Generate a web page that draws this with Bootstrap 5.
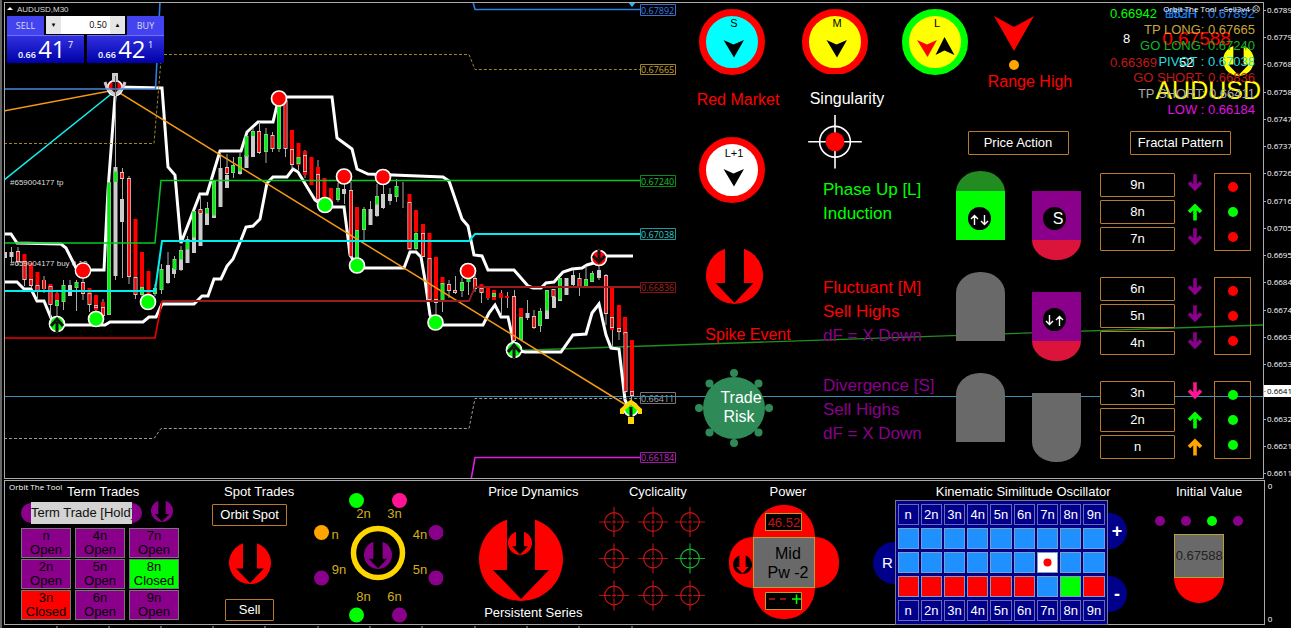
<!DOCTYPE html>
<html lang="en">
<head>
<meta charset="utf-8">
<meta name="viewport" content="width=device-width, initial-scale=1">
<title>AUDUSD,M30</title>
<link href="https://cdn.jsdelivr.net/npm/bootstrap@5.3.0/dist/css/bootstrap.min.css" rel="stylesheet">
<style>
:root{--purple:#8b008b;--lime:#0f0;--navy:#00008b;--bronze:#b87a2e;--gold:#ffd700}
body{background:#000;color:#fff;font:13px/16px "Liberation Sans",Arial,sans-serif;overflow-x:hidden}
.terminal{padding:2px 0 0 4px;box-shadow:inset 2px 0 #666;gap:1px;overflow:hidden}
.pane{border:1px solid #aaa;min-width:0}
.tiny{font:8px/12px "Open Sans",sans-serif}
.axis{width:27px;overflow:hidden}
.axis li{line-height:12px;padding-left:3px;position:relative;white-space:nowrap}
.axis.scale{padding-top:2px}
.axis.scale li::before{content:"";position:absolute;left:0;top:6px;width:2px;height:1px;background:#aaa}
.axis li.now{background:#fff;color:#000}
.plotarea{width:100%;height:100%;top:0;left:0}
svg text{font-family:"Liberation Sans",Arial,sans-serif}
svg .tag text,svg .note{font-family:"Open Sans",sans-serif}
.caption16{font-size:16px;line-height:24px;white-space:nowrap}
.t-red{color:#f00}.t-lime{color:var(--lime)}.t-purple{color:var(--purple)}.t-pink{color:#ff1493}.t-orange{color:#ffa500}
.t-blue{color:#1e7fe8}.t-gold{color:#c8a63a}.t-green{color:#12b52a}.t-cyan{color:#2dd}.t-brick{color:#c01818}.t-silver{color:#aaa}.t-magenta{color:#e010e0}
.b-purple{background:var(--purple)}.b-lime{background:var(--lime)}.b-red{background:#f00}

/* one-click quote panel */
.quote{left:2px;top:13px;width:157px;font-family:"Open Sans",sans-serif}
.quote button{border:0;padding:0;color:#dde;background:#4343f0}
.side{width:37px;height:19px;font-size:9px;line-height:18px}
.spin{height:18px;width:79px;background:#ddd}
.spin button{width:15px;background:#e6e6e6;color:#000;font-size:6px;line-height:18px}
.spin input{width:49px;border:0;padding:0 3px 0 0;font-size:9px;text-align:right;color:#000}
.quote .tile{height:28px;background:linear-gradient(#3030e0,#0000a8);color:#fff;font-size:9px;font-weight:600;border-top:1px solid #7070ff}
.tile b{font-size:24px;line-height:24px;font-weight:400}
.tile sup{font-size:9px;font-weight:400;top:-10px}

/* signal board */
.board{padding-top:6px}
.col-a{width:104px}
.gap-label{margin-top:13px}
.gap-ring{margin-top:25px}
.gap-spike{margin-top:44px}
.gap-spiketext{margin-top:19px}
.gap-risk{margin-top:22px}
.board-main{width:475px}
.strip{height:162px}
.stack-m{width:94px}
.stack-l{width:86px;padding-left:20px}
.stack-r{width:100px;padding-top:7px}
.gap-dot{margin-top:9px}
.frame-btn{background:#000;color:#fff;border:1px solid var(--bronze);border-radius:1px;height:24px;padding:0;font-size:13px;line-height:20px;white-space:nowrap}
.frame-btn.slim{height:22px}
.fb-wide{width:101px}.fb-mid{width:75px}.fb-small{width:49px}
.gap-26{gap:26px}.gap-3px{gap:3px}
.phases{width:168px;padding:7px 0 0 35px;gap:26px}
.phases p{margin:0;height:72px;font-size:17px;line-height:24px;white-space:nowrap}
.tombs{width:49px;gap:32px}
.tombs.low{margin:20px 19px 0 27px}
.tomb{height:69px;background:#696969;border-radius:24px 24px 0 0/21px 21px 0 0;overflow:hidden}
.low .tomb{border-radius:0 0 24px 24px/0 0 20px 20px}
.tomb.up{background:linear-gradient(#228b22 20px,var(--lime) 20px);padding:36px 0 0 12px}
.tomb.down{background:linear-gradient(var(--purple) 49px,#dc143c 49px);padding:16px 0 0 11px}
.eye{width:23px;height:23px}
.eye.big{font-size:16px;line-height:23px;padding-left:7px}
.levels{padding-top:2px}
.levels.arrows{width:18px;margin:0 10px 0 11px}
.slot{height:24px}
.lamps{width:37px;height:78px;border:1px solid var(--bronze)}
.lamp{width:10px;height:10px;border-radius:50%}

/* price read-outs in the corner */
.pivots{top:3px;right:8px;text-align:right;white-space:nowrap}
.info{top:0;right:2px;width:151px}
.info .r1{height:22px;padding-top:3px;gap:9px}
.info .r2{height:28px;gap:32px;padding:0 0 0 13px}
.info .r3{height:24px;gap:14px;padding-top:2px}
.big19{font-size:19px;line-height:22px}
.sym{font-size:25px;line-height:26px;color:#ff0;white-space:nowrap}
.badge-icon{top:42px;right:9px}
.prog{top:0;right:3px;white-space:nowrap}

/* lower panel */
.lower{display:grid;grid-template-columns:200fr 100fr 145fr 150fr 115fr 145fr 270fr 133fr;height:145px}
.lower>section{padding-top:3px;min-width:0}
.lower h2{font-size:13px;line-height:16px;font-weight:400;margin:0;text-align:center;white-space:nowrap}
.term{padding-left:16px}
.term h2{text-align:left;padding-left:46px}
.cap{width:10px;height:20px;background:var(--purple)}
.cap.l{border-radius:10px 0 0 10px}.cap.r{border-radius:0 10px 10px 0}
.hold{width:101px;height:22px;line-height:22px;background:#d3d3d3;color:#111;border:0;padding:0;font-size:13px}
.cells{display:grid;grid-template-columns:repeat(3,50px);gap:1px 4px;margin-top:2px}
.cells button{height:30px;border:1px solid #777;color:#000;padding:0;font-size:13px;line-height:14px}
.spot{padding-right:11px}
.spot h2{padding-left:19px}
.petals{display:grid;grid-template:32px 51px 31px/24px 62px 24px;margin-top:5px}
.petal{background:#f00}
.petal.north{border-radius:30px 30px 0 0/32px 32px 0 0}
.petal.west{border-radius:24px 0 0 24px}
.petal.east{border-radius:0 24px 24px 0}
.petal.south{border-radius:0 0 30px 30px/0 0 31px 31px}
.mini{width:37px;height:18px;background:#000;border:1px solid #b8a030;line-height:17px;margin:0 auto}
.core{background:#696969;border:1px solid #b8a030;color:#000;font-size:16px;line-height:19px;padding-left:8px}
.osc h2{text-align:right;padding-right:20px}
.osc table{border-collapse:separate;border-spacing:2px 3px;background:var(--navy);border:1px solid #778;width:213px;height:125px;table-layout:fixed}
.osc td,.osc th{height:21px;padding:0;border:1px solid #6a6ab0;font-size:13px;font-weight:400;line-height:19px;text-align:center}
.osc td{background:#1e90ff;border-color:#7f9fbf}
.osc td.r{background:#f00}.osc td.g{background:var(--lime)}.osc td.w{background:#fff}
.knob{background:var(--navy);border:0;color:#fff;padding:0;width:19px;height:36px;border-radius:0 18px 18px 0;font-weight:700;font-size:18px;line-height:24px}
.knob.rr{width:22px;height:42px;border-radius:21px 0 0 21px;font-weight:400;font-size:15px;padding-left:8px}
.start-val{width:50px;height:44px;background:#696969;border:1px solid #b8a030;color:#222;line-height:42px}
.start-cup{width:50px;height:25px;background:#f00;border-radius:0 0 25px 25px}
.ticks{height:2px}
</style>
</head>
<body>
<svg width="0" height="0" class="position-absolute" aria-hidden="true">
  <symbol id="drop" viewBox="-42 -42 84 84"><path fill="currentColor" d="M-14-39.6A42 42 0 1 0 14-39.6V11H28L0 40-28 11H-14Z"/></symbol>
  <symbol id="cross" viewBox="-16 -16 32 32"><g fill="none" stroke="currentColor" stroke-width="1.2"><circle r="9.3"/><path d="M0-15V-3M0 3V15M-15 0H-3M3 0H15M-2 0H2M0-2V2" opacity=".9"/></g></symbol>
  <symbol id="dn" viewBox="0 0 14 16"><path d="M7 1V12M2 8L7 13 12 8" fill="none" stroke="currentColor" stroke-width="3"/></symbol>
  <symbol id="upp" viewBox="0 0 14 16"><path d="M7 15V4M2 8L7 3 12 8" fill="none" stroke="currentColor" stroke-width="3"/></symbol>
</svg>

<main class="terminal min-vh-100 d-flex flex-column">
  <div class="d-flex flex-grow-1">
    <div class="pane flex-grow-1 position-relative overflow-hidden">
      <svg class="plotarea position-absolute" role="img" aria-label="AUDUSD price chart">
        <g transform="translate(-5 -3)" fill="none">
          <path d="M4 396.5H3000" stroke="#3a8fb5"/>
          <path d="M514 350.5L1263 325" stroke="#1f8f1f" stroke-width="1.3"/>
          <!-- channel -->
          <g stroke="#fff" stroke-width="3">
            <path d="M5 234H11L17 243 61 244 66 248 76 268 83 270H104L108 190 115 97 118 87 162 88 168 167 175 175 181 243 200 194H207L220 151H241L247 132 258 122H273L279 97H332L337 138 352 149 357 169 368 174 443 177 449 181 462 219 468 226 474 255 482 256 488 270H514L528 286 533 288H541L546 283 554 282 563 272 572 269 582 268 587 265 597 262 607 256H633"/>
            <path d="M5 282H17L24 289H31L37 301H44L51 318 57 325H105L110 322H143L149 317H156L162 304H194L202 296H208L214 279H221L227 266 233 259 241 240 246 227 253 226 260 219 267 183 273 177H287L293 169 298 172 315 200 325 207H344L347 230 350 255 357 266 362 268H404L410 252H416L421 257 425 280 430 315 435 323 441 325H483L489 313 495 305 501 317H508L512 335 514 350 525 352H561L573 335 586 334 592 313 599 304 606 335 611 348 619 349 625 400 630 410"/>
          </g>
          <!-- wicks -->
          <path stroke="#aaa" d="M11.500 247V262M18 247V265M24.500 254V286M31.500 270V288M37.500 272V300M44 276V293M50.500 284V318M57 292V320M63.500 280V310M70 280V296M76.500 280V311M83 270V300M89.500 288V312M96 295V320M103 299V318M115.500 90V280M122.500 168V278M129 176V284M135.500 268V299M142 280V300M148.500 280V304M155 284V296M161.500 264V294M168 252V284M174.500 256V278M181 246V271M187.500 236V262M200.500 195V245M207.500 202V225M220.500 152V207M227 154V188M233.500 157V178M240 153V175M253 128V157M259.500 122V154M266 128V163M272.500 132V152M279 100V152M285.500 98V157M292 140V168M298.500 157V170M305 150V178M318 160V203M325 196V207M338 183V202M344.500 176V204M351 182V258M357.500 210V267M364 207V240M370.500 201V225M377 184V217M383.500 178V209M390 188V205M396.500 179V202M403 182V208M416 220V250M436 258V323M442.500 280V312M449 280V298M455.500 276V294M462 278V297M468.500 268V295M475 275V292M481.500 284V303M488 287V300M494.500 290V300M501.500 290V316M507.500 292V308M514.500 290V350M527.500 300V320M534 310V329M540.500 308V332M573.500 270V286M579.500 273V296M586 266V287M592.500 271V282M599 258V280M606 274V325M612.500 290V347M619 305V340M625 318V394M631.500 340V412"/>
          <!-- momentum bars -->
          <path stroke="#f00" stroke-width="4" d="M24.500 254V280M31 263V285M37.500 272V292M50.500 284V304M57 293V305M89.500 288V300M96 295V310M103 302V315M135.500 219V277M142 252V290M148.500 271V299M292 130V165M298.500 143V165M305 151V175M311.500 157V185M318 167V200M324.500 178V200M331 188V205M357 207V240M409.500 194V250M416 210V232M423 224V250M429.500 233V300M436 257V300M442.500 277V285M481.500 284V292M488 288V298M494 290V300M501 293V298M507 296V298M521 308V330M612 286V330M619 305V332M625 317V335M632 340V392"/>
          <path stroke="#ccc" stroke-width="4" d="M5 252V258M11.500 252V257M70 285V296M115.500 167V276M122 199V222M168 265V283M174 268V274M181 258V270M187.500 250V263M194 235V253M200.500 211V246M207 213V225M214 205V218M220.500 168V207M227 175V188M233 165V168M240 170V174M246.500 155V168M253 136V157M344 189V194M370.500 209V225M377 203V216M383 194V208M390 194V201M527.500 313V318M547 300V319M554 297V308M560 290V301M566.500 278V295M573 275V285M599 270V278"/>
          <!-- candle bodies -->
          <path stroke="#ccc" stroke-width="4" d="M18 251V262M24.500 261V280M31 279V286M37.500 285V292M44 280V289M50.500 286V305M83 282V294M89.500 293V305M96 305V308M103 307V316M122 172V179M129 178V277M135.500 277V295M200.500 209V214M227 167V174M259 131V153M272.500 135V149M285.500 100V149M292 149V165M305 155V172M318 174V200M351 190V257M409.500 202V249M423 233V257M429.500 258V300M436 299V303M449 284V291M455 290V293M475 278V289M481.500 288V293M514 296V341M534 316V328M553.500 289V297M579.500 278V287M606 275V314M612 317V328M619 328V332M625.500 332V392M632 391V396"/>
          <path stroke="#f00808" stroke-width="2.600" d="M18 252V261M24.500 262V279M31 280V285M37.500 286V291M44 280V289M50.500 287V304M83 283V293M89.500 294V304M96 306V307M103 308V315M122 173V178M129 179V276M135.500 278V294M200.500 210V213M227 168V173M259 132V152M272.500 136V148M285.500 101V148M292 150V164M305 156V171M318 175V199M351 191V256M409.500 203V248M423 234V256M429.500 259V299M436 300V302M449 285V290M455 291V292M475 279V288M481.500 289V292M514 297V340M534 317V327M553.500 290V296M579.500 279V286M606 276V313M612 318V327M619 329V331M625.500 333V391M632 392V395"/>
          <path stroke="#8c8" stroke-width="4" d="M57 300V306M63.500 285V302M76.500 282V288M109 182V315M115.500 171V182M142 287V295M155 288V294M161.500 269V290M174.500 259V270M181 250V260M187.500 239V250M194 211V238M207 208V214M214 181V216M233 165V173M240 157V172M246.500 136V157M253 131V136M266 134V152M279 100V149M298.500 157V164M338 188V200M357 230V262M364 209V230M377 196V205M396.500 186V197M416 233V249M442.500 283V302M462 282V291M468.500 277V282M494 293V297M521 317V340M540 311V326M547 290V311M560 278V300M586 279V287M592 273V282"/>
          <path stroke="#00f010" stroke-width="2.600" d="M57 301V305M63.500 286V301M76.500 283V287M109 183V314M115.500 172V182M142 288V294M155 289V293M161.500 270V289M174.500 260V269M181 251V259M187.500 240V249M194 212V237M207 209V213M214 182V215M233 166V172M240 158V171M246.500 137V156M253 132V136M266 135V151M279 101V148M298.500 158V163M338 189V199M357 231V261M364 210V229M377 197V204M396.500 187V196M416 234V248M442.500 284V301M462 283V290M468.500 278V282M494 294V296M521 318V339M540 312V325M547 291V310M560 279V299M586 280V286M592 274V281"/>
          <!-- pivot levels -->
          <path stroke="#2a7fe8" stroke-width="1.600" d="M155.500 89L157 60 160 2M473 2L475 9.500H640"/>
          <path stroke="#a08428" stroke-dasharray="3 2" d="M4 143.500H154L161 60M164 54.500H469L475 69.500H640"/>
          <path stroke="#f59a12" stroke-width="1.500" d="M4 111L115 90 631 408"/>
          <path stroke="#1ee" stroke-width="1.600" d="M4 180L115 91"/>
          <path stroke="#0ee" stroke-width="2" d="M4 291H155L162 241H469L475 234H640"/>
          <path stroke="#0c2" stroke-width="1.500" d="M4 243H155L161 180.500H640"/>
          <path stroke="#e00" stroke-width="1.600" d="M4 338H155L162 301"/>
          <path stroke="#9b1c1c" stroke-width="1.800" d="M162 301H469L475 287H640"/>
          <path stroke="#999" stroke-dasharray="3 2" d="M4 438.500H154L161 428.500H469L475 398.500H640"/>
          <path stroke="#e01ee0" stroke-width="1.600" d="M471 480L475 457.500H640"/>
          <path fill="#1fbfff" d="M628 2H636L632 7Z"/>
          <!-- swing markers -->
          <g fill="#f00" stroke="#fff" stroke-width="1.700"><circle cx="83" cy="270.500" r="7.500"/><circle cx="279" cy="98.500" r="7.500"/><circle cx="344" cy="176.500" r="7.500"/><circle cx="383" cy="177" r="7.500"/><circle cx="468" cy="271" r="7.500"/><circle cx="599" cy="258" r="7.500"/><circle cx="115" cy="88" r="7.500"/></g>
          <g fill="#0f0" stroke="#fff" stroke-width="1.700"><circle cx="57" cy="324" r="7.500"/><circle cx="96" cy="319" r="7.500"/><circle cx="148" cy="302" r="7.500"/><circle cx="325" cy="205" r="7.500"/><circle cx="357" cy="265.500" r="7.500"/><circle cx="435.500" cy="322.500" r="7.500"/><circle cx="514" cy="350" r="7.500"/><circle cx="631" cy="409" r="7"/></g>
          <path stroke="#111" stroke-width="3" d="M51 326L57 319 63 326M57 322V332M508 352L514 345 520 352M514 348V358M593 256L599 262 605 256M599 250V260"/>
          <path d="M115 82V92" stroke="#111" stroke-width="5"/><path d="M105 82L107 88 115 95 123 88 125 82" stroke="#ccc" stroke-width="3"/><path d="M115 73V82" stroke="#ccc" stroke-width="6"/><path d="M4 89H155" stroke="#4a86d8" stroke-width="1.600"/><path d="M115.500 76V96" stroke="#556"/>
          <path d="M622 414V410L631 402 640 410V414" stroke="#ffd700" stroke-width="4"/><path d="M631 407V417" stroke="#111" stroke-width="3"/><path d="M631 417V424" stroke="#ffd700" stroke-width="6"/>
          <!-- level tags -->
          <g class="tag" font-size="9" stroke-width="1">
            <path fill="#000" stroke="#3a6fc8" d="M640.500 4.500H675.500V15.500H640.500Z"/><text x="641" y="13.500" fill="#3a7fe0">0.67892</text>
            <path fill="#000" stroke="#a08428" d="M640.500 64.500H675.500V74.500H640.500Z"/><text x="641" y="73" fill="#c8a63a">0.67665</text>
            <path fill="#000" stroke="#0a8a1a" d="M640.500 175.500H675.500V186.500H640.500Z"/><text x="641" y="184.500" fill="#1fc02f">0.67240</text>
            <path fill="#000" stroke="#189a9a" d="M640.500 228.500H675.500V239.500H640.500Z"/><text x="641" y="237.500" fill="#3cc">0.67038</text>
            <path fill="#000" stroke="#801515" d="M640.500 282.500H675.500V292.500H640.500Z"/><text x="641" y="291" fill="#a82020">0.66836</text>
            <path fill="#000" stroke="#777" d="M640.500 392.500H675.500V403.500H640.500Z"/><text x="641" y="401.500" fill="#aaa">0.66411</text>
            <path stroke="#3a8fb5" d="M640 396.500H676"/>
            <path fill="#000" stroke="#a018a0" d="M640.500 452.500H675.500V462.500H640.500Z"/><text x="641" y="461" fill="#c22ec2">0.66184</text>
          </g>
          <g class="note" fill="#ddd" font-size="8"><path d="M7 10H13L10 7Z" fill="#fff"/><text x="17" y="12">AUDUSD,M30</text><text x="10" y="185">#659004177 tp</text><text x="10" y="266">#659004177 buy 0.10</text></g>
          <circle cx="83" cy="270.500" r="6.800" fill="#f00"/>
        </g>
      </svg>

      <div class="quote position-absolute">
        <div class="d-flex justify-content-between">
          <button class="side" type="button">SELL</button>
          <div class="spin d-flex"><button type="button" aria-label="Less">▼</button><input type="text" value="0.50" aria-label="Volume"><button type="button" aria-label="More">▲</button></div>
          <button class="side" type="button">BUY</button>
        </div>
        <div class="d-flex gap-3px">
          <button class="tile flex-fill" type="button">0.66 <b>41</b> <sup>7</sup></button>
          <button class="tile flex-fill" type="button">0.66 <b>42</b> <sup>1</sup></button>
        </div>
      </div>

      <div class="board position-relative d-flex justify-content-end">
        <div class="col-a d-flex flex-column align-items-center">
          <svg class="me-2" width="66" height="66"><circle cx="33" cy="33" r="29.500" fill="#0ff" stroke="#f00" stroke-width="7"/><text x="35" y="18" font-size="11" text-anchor="middle">S</text><path d="M24.500 31L34.500 35.500 45 31 35 48.500Z"/></svg>
          <span class="caption16 gap-label ps-1 t-red">Red Market</span>
          <svg class="gap-ring me-2" width="66" height="66"><circle cx="33" cy="33" r="29.500" fill="#fff" stroke="#f00" stroke-width="7"/><text x="35" y="20" font-size="11" text-anchor="middle">L+1</text><path d="M24.500 32L34.500 36.500 45 32 35 49.500Z"/></svg>
          <svg class="gap-spike me-1 t-red" width="57" height="57"><use href="#drop"/></svg>
          <span class="caption16 gap-spiketext ps-4 t-red">Spike Event</span>
          <svg class="gap-risk me-1" width="78" height="78" viewBox="-39 -39 78 78"><g fill="#2e8b57"><circle r="31"/><circle cy="-35" r="4"/><circle cy="35" r="4"/><circle cx="-35" r="4"/><circle cx="35" r="4"/><circle cx="-24.500" cy="-24.500" r="4"/><circle cx="24.500" cy="-24.500" r="4"/><circle cx="-24.500" cy="24.500" r="4"/><circle cx="24.500" cy="24.500" r="4"/></g><g fill="#fff" font-size="16" text-anchor="middle"><text x="7" y="-5">Trade</text><text x="5" y="14">Risk</text></g></svg>
        </div>
        <div class="board-main">
          <div class="strip d-flex">
            <div class="stack-m d-flex flex-column align-items-center">
              <svg width="66" height="66"><circle cx="33" cy="33" r="29.500" fill="#ff0" stroke="#f00" stroke-width="7"/><text x="35" y="18" font-size="11" text-anchor="middle">M</text><path d="M24.500 31L34.500 35.500 45 31 35 48.500Z"/></svg>
              <span class="caption16 gap-label ps-4">Singularity</span>
              <svg width="56" height="60" viewBox="-28 -28 56 60"><g fill="none" stroke="#fff" stroke-width="1.600"><circle r="15.500" cy="3"/><path d="M0-24V30M-27 3H27"/></g><circle cy="3" r="9.500" fill="#f00"/></svg>
            </div>
            <div class="stack-l">
              <svg width="66" height="66"><circle cx="33" cy="33" r="29.500" fill="#ff0" stroke="#0f0" stroke-width="7"/><text x="35" y="18" font-size="11" text-anchor="middle">L</text><path fill="#f00" d="M15 31L25 35.500 35 31 25.500 48Z"/><path d="M42.500 28L52.500 46 42.500 41.500 33.500 46Z"/></svg>
            </div>
            <div class="stack-r d-flex flex-column align-items-center">
              <svg class="me-2" width="40" height="35"><path fill="#f00" d="M0 0L20 11 40 0 20 35Z"/></svg>
              <svg class="me-2 gap-dot" width="10" height="10"><circle cx="5" cy="5" r="5" fill="#ffa500"/></svg>
              <span class="caption16 ps-4 t-red">Range High</span>
              <button class="frame-btn fb-wide mt-auto mb-3" type="button">Price Action</button>
            </div>
            <div class="ms-auto me-4 pe-2 d-flex align-items-end mb-3">
              <button class="frame-btn fb-wide" type="button">Fractal Pattern</button>
            </div>
          </div>
          <div class="d-flex">
            <div class="phases d-flex flex-column">
              <p class="t-lime">Phase Up [L]<br>Induction</p>
              <p class="t-red">Fluctuant [M]<br>Sell Highs<br><span class="t-purple">dF = X Down</span></p>
              <p class="t-purple">Divergence [S]<br>Sell Highs<br>dF = X Down</p>
            </div>
            <div class="tombs d-flex flex-column">
              <div class="tomb up"><svg class="eye d-block" viewBox="0 0 23 23"><circle cx="11.500" cy="11.500" r="11.500"/><path d="M6.500 18V9M3 12L6.500 8.500 10 12M16.500 8V17M13 14L16.500 17.500 20 14" fill="none" stroke="#fff" stroke-width="1.400"/></svg></div>
              <div class="tomb"></div>
              <div class="tomb"></div>
            </div>
            <div class="tombs low d-flex flex-column">
              <div class="tomb down"><div class="eye big bg-black rounded-circle text-center">S</div></div>
              <div class="tomb down"><svg class="eye d-block" viewBox="0 0 23 23"><circle cx="11.500" cy="11.500" r="11.500"/><path d="M6.500 7V16M3 13L6.500 16.500 10 13M16.500 18V8M13 12L16.500 8.500 20 12" fill="none" stroke="#fff" stroke-width="1.400"/></svg></div>
              <div class="tomb"></div>
            </div>
            <div class="levels d-flex flex-column gap-26">
              <div class="d-flex flex-column gap-3px"><button class="frame-btn fb-mid" type="button">9n</button><button class="frame-btn fb-mid" type="button">8n</button><button class="frame-btn fb-mid" type="button">7n</button></div>
              <div class="d-flex flex-column gap-3px"><button class="frame-btn fb-mid" type="button">6n</button><button class="frame-btn fb-mid" type="button">5n</button><button class="frame-btn fb-mid" type="button">4n</button></div>
              <div class="d-flex flex-column gap-3px"><button class="frame-btn fb-mid" type="button">3n</button><button class="frame-btn fb-mid" type="button">2n</button><button class="frame-btn fb-mid" type="button">n</button></div>
            </div>
            <div class="levels arrows d-flex flex-column gap-26">
              <div class="d-flex flex-column gap-3px"><svg class="slot t-purple" viewBox="0 0 14 20"><use href="#dn" width="14" height="16"/></svg><svg class="slot t-lime" viewBox="0 0 14 20"><use href="#upp" y="2" width="14" height="16"/></svg><svg class="slot t-purple" viewBox="0 0 14 20"><use href="#dn" width="14" height="16"/></svg></div>
              <div class="d-flex flex-column gap-3px"><svg class="slot t-purple" viewBox="0 0 14 20"><use href="#dn" width="14" height="16"/></svg><svg class="slot t-purple" viewBox="0 0 14 20"><use href="#dn" width="14" height="16"/></svg><svg class="slot t-purple" viewBox="0 0 14 20"><use href="#dn" width="14" height="16"/></svg></div>
              <div class="d-flex flex-column gap-3px"><svg class="slot t-pink" viewBox="0 0 14 20"><use href="#dn" width="14" height="16"/></svg><svg class="slot t-lime" viewBox="0 0 14 20"><use href="#upp" y="2" width="14" height="16"/></svg><svg class="slot t-orange" viewBox="0 0 14 20"><use href="#upp" y="2" width="14" height="16"/></svg></div>
            </div>
            <div class="levels d-flex flex-column gap-26">
              <div class="lamps d-flex flex-column align-items-center justify-content-around"><i class="lamp b-red"></i><i class="lamp b-lime"></i><i class="lamp b-red"></i></div>
              <div class="lamps d-flex flex-column align-items-center justify-content-around"><i class="lamp b-red"></i><i class="lamp b-red"></i><i class="lamp b-red"></i></div>
              <div class="lamps d-flex flex-column align-items-center justify-content-around"><i class="lamp b-lime"></i><i class="lamp b-lime"></i><i class="lamp b-lime"></i></div>
            </div>
          </div>
        </div>
      </div>

      <div class="info position-absolute">
        <div class="r1 d-flex"><span class="t-lime">0.66942</span><span class="t-blue">152H</span></div>
        <div class="r2 d-flex align-items-center"><span>8</span><span class="big19 t-red">0.67588</span></div>
        <div class="r3 d-flex"><span class="t-brick">0.66369</span><span class="ps-2">52</span></div>
        <div class="sym text-end">AUDUSD</div>
      </div>
      <svg class="badge-icon position-absolute" width="31" height="31" color="#ff0"><use href="#drop"/></svg>
      <div class="pivots position-absolute">
        <div class="t-blue">HIGH : 0.67892</div>
        <div class="t-gold">TP LONG: 0.67665</div>
        <div class="t-green">GO LONG: 0.67240</div>
        <div class="t-cyan">PIVOT : 0.67038</div>
        <div class="t-brick">GO SHORT: 0.66836</div>
        <div class="t-silver">TP SHORT: 0.66411</div>
        <div class="t-magenta">LOW : 0.66184</div>
      </div>
      <div class="prog tiny position-absolute">Orbit The Tool --Sell3v4 ☹</div>
    </div>
    <ul class="axis scale tiny list-unstyled mb-0 d-flex flex-column justify-content-between">
      <li>0.6789</li><li>0.6779</li><li>0.6768</li><li>0.6758</li><li>0.6747</li><li>0.6737</li><li>0.6726</li><li>0.6716</li><li>0.6705</li><li>0.6695</li><li>0.6684</li><li>0.6674</li><li>0.6663</li><li>0.6653</li><li class="now">0.6641</li><li>0.6632</li><li>0.6621</li><li>0.6611</li>
    </ul>
  </div>

  <div class="d-flex">
    <div class="pane lower flex-grow-1">
      <section class="term position-relative">
        <span class="tiny position-absolute top-0 start-0 ps-1">Orbit The Tool</span>
        <h2>Term Trades</h2>
        <div class="d-flex align-items-center"><i class="cap l"></i><input class="hold" type="text" value="Term Trade [Hold]" aria-label="Term trade"><i class="cap r"></i><svg class="t-purple ms-2 mb-1" width="24" height="22"><use href="#drop"/></svg></div>
        <div class="cells">
          <button type="button" class="b-purple">n<br>Open</button><button type="button" class="b-purple">4n<br>Open</button><button type="button" class="b-purple">7n<br>Open</button>
          <button type="button" class="b-purple">2n<br>Open</button><button type="button" class="b-purple">5n<br>Open</button><button type="button" class="b-lime">8n<br>Closed</button>
          <button type="button" class="b-red">3n<br>Closed</button><button type="button" class="b-purple">6n<br>Open</button><button type="button" class="b-purple">9n<br>Open</button>
        </div>
      </section>
      <section class="spot d-flex flex-column align-items-center">
        <h2>Spot Trades</h2>
        <button class="frame-btn slim fb-mid mt-1" type="button">Orbit Spot</button>
        <svg class="t-red my-auto" width="42" height="42"><use href="#drop"/></svg>
        <button class="frame-btn slim fb-small mb-1" type="button">Sell</button>
      </section>
      <section class="p-0 text-center">
        <svg class="d-block mx-auto" width="130" height="143" viewBox="313 482 130 143">
          <circle cx="378" cy="554" r="24.500" fill="none" stroke="#ffd700" stroke-width="5.500"/>
          <use href="#drop" x="364" y="542" width="28" height="28" color="#8b008b"/>
          <g fill="#8b008b"><circle cx="436" cy="533.500" r="7.500"/><circle cx="436" cy="579" r="7.500"/><circle cx="321.500" cy="579" r="7.500"/><circle cx="399.500" cy="616" r="7.500"/></g>
          <g fill="#0f0"><circle cx="356.500" cy="501.500" r="7.500"/><circle cx="356.500" cy="616" r="7.500"/></g>
          <circle cx="399.500" cy="501.500" r="7.500" fill="#ff1493"/><circle cx="321.500" cy="533.500" r="7.500" fill="#ffa500"/>
          <g fill="#d4af1e" font-size="13" text-anchor="middle"><text x="363.500" y="519">2n</text><text x="394.500" y="519">3n</text><text x="335" y="540">n</text><text x="420" y="540">4n</text><text x="339" y="575">9n</text><text x="420" y="575">5n</text><text x="363.500" y="602">8n</text><text x="394.500" y="602">6n</text></g>
        </svg>
      </section>
      <section class="d-flex flex-column align-items-center">
        <h2 class="ps-3">Price Dynamics</h2>
        <svg class="mt-auto me-2" width="84" height="84" viewBox="-42 -42 84 84" color="#f00"><use href="#drop" x="-42" y="-42" width="84" height="84"/><use href="#drop" x="-13" y="-28" width="24" height="24"/></svg>
        <span class="ps-3 mt-1 mb-1">Persistent Series</span>
      </section>
      <section class="d-flex flex-column align-items-center">
        <h2>Cyclicality</h2>
        <svg class="mt-1 me-2" width="110" height="110" viewBox="1 -2 110 110" color="#c81414">
          <use href="#cross" width="32" height="32"/><use href="#cross" x="39" width="32" height="32"/><use href="#cross" x="76" width="32" height="32"/>
          <use href="#cross" y="36.500" width="32" height="32"/><use href="#cross" x="39" y="36.500" width="32" height="32"/><use href="#cross" x="76" y="36.500" width="32" height="32" color="#14b82c"/>
          <use href="#cross" y="73.500" width="32" height="32"/><use href="#cross" x="39" y="73.500" width="32" height="32"/><use href="#cross" x="76" y="73.500" width="32" height="32"/>
        </svg>
      </section>
      <section class="d-flex flex-column align-items-center">
        <h2>Power</h2>
        <div class="petals me-2">
          <i></i><div class="petal north pt-2"><div class="mini text-center t-brick">46.52</div></div><i></i>
          <div class="petal west d-flex align-items-center text-black"><svg class="ms-1 mt-1" width="19" height="19"><use href="#drop"/></svg></div>
          <div class="core d-flex flex-column justify-content-center text-center">Mid<br>Pw -2</div>
          <div class="petal east"></div>
          <i></i><div class="petal south pt-1"><svg class="d-block mx-auto" width="37" height="18"><path d="M.5.5H36.500V17.500H.5Z" stroke="#b8a030"/><path d="M4 7H10M15 7H21" stroke="#c81414" stroke-width="1.500"/><path d="M27 7H36M31.500 2.500V12" stroke="#0f0" stroke-width="1.500"/></svg></div><i></i>
        </div>
      </section>
      <section class="osc pb-0">
        <h2>Kinematic Similitude Oscillator</h2>
        <div class="d-flex justify-content-center ms-2">
          <button class="knob rr align-self-center" type="button">R</button>
          <table>
            <thead><tr><th>n</th><th>2n</th><th>3n</th><th>4n</th><th>5n</th><th>6n</th><th>7n</th><th>8n</th><th>9n</th></tr></thead>
            <tbody>
              <tr><td></td><td></td><td></td><td></td><td></td><td></td><td></td><td></td><td></td></tr>
              <tr><td></td><td></td><td></td><td></td><td></td><td></td><td class="w"><svg class="d-block mx-auto" width="9" height="9"><circle cx="4.500" cy="4.500" r="4" fill="#f00"/></svg></td><td></td><td></td></tr>
              <tr><td class="r"></td><td class="r"></td><td class="r"></td><td class="r"></td><td class="r"></td><td class="r"></td><td></td><td class="g"></td><td class="r"></td></tr>
            </tbody>
            <tfoot><tr><th>n</th><th>2n</th><th>3n</th><th>4n</th><th>5n</th><th>6n</th><th>7n</th><th>8n</th><th>9n</th></tr></tfoot>
          </table>
          <div class="d-flex flex-column justify-content-around"><button class="knob" type="button">+</button><button class="knob" type="button">-</button></div>
        </div>
      </section>
      <section class="d-flex flex-column align-items-center">
        <h2 class="ps-4">Initial Value</h2>
        <div class="d-flex gap-3 mt-3 ms-1"><i class="lamp b-purple"></i><i class="lamp b-purple"></i><i class="lamp b-lime"></i><i class="lamp b-purple"></i></div>
        <div class="start-val text-center mt-2 ms-1">0.67588</div>
        <div class="start-cup ms-1"></div>
      </section>
    </div>
    <ul class="axis tiny list-unstyled mb-0 d-flex flex-column justify-content-between"><li>0</li><li>0</li></ul>
  </div>
  <svg class="ticks w-100" aria-hidden="true"><path stroke="#aaa" d="M53 0V3M105 0V3M157 0V3M209 0V3M261 0V3M314 0V3M366 0V3M418 0V3M471 0V3M523 0V3M575 0V3M628 0V3"/></svg>
</main>
<script src="https://cdn.jsdelivr.net/npm/bootstrap@5.3.0/dist/js/bootstrap.bundle.min.js"></script>
</body>
</html>
